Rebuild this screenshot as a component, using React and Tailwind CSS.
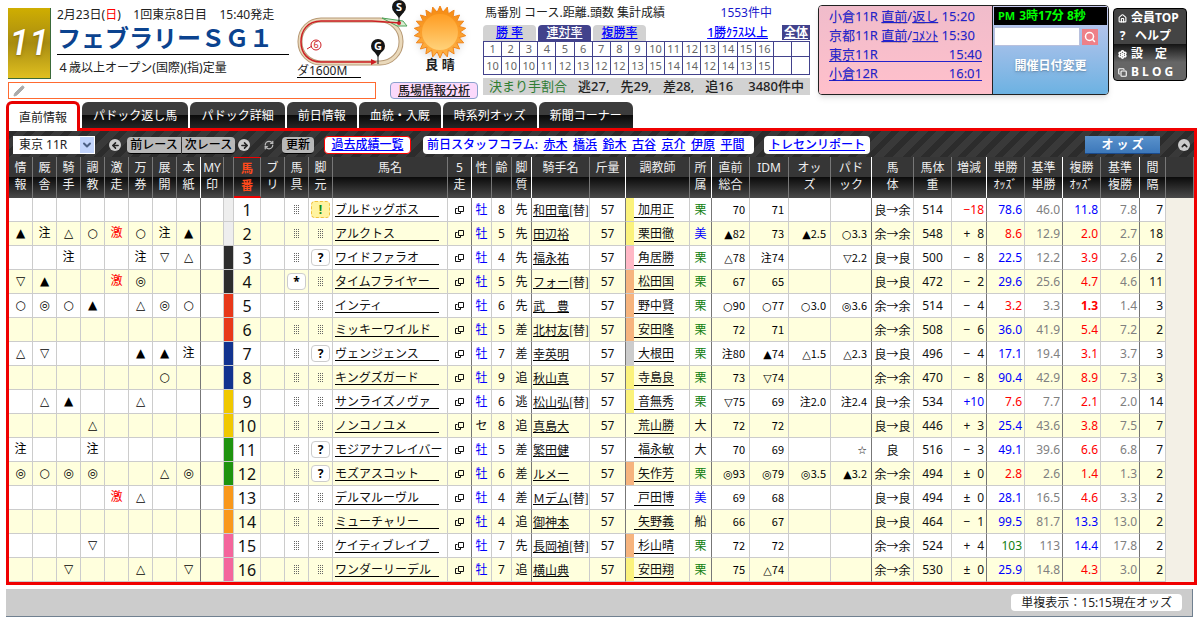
import React, { useState } from "react";
import { ArrowLeft, ArrowRight, ChevronDown, ChevronUp, Copy, House, Pencil, RefreshCw, Search, Settings } from "lucide-react";

const MARK_COLUMNS = ["情報", "厩舎", "騎手", "調教", "激走", "万券", "展開", "本紙"];

const COLUMNS = [
  ...MARK_COLUMNS.map((m, i) => ({ w: "w-6", lines: [m[0], m[1]], strong: i === 7 })),
  { w: "w-[23px]", lines: ["MY", "印"] },
  { w: "w-[10px]", lines: [] },
  { w: "w-[27px]", lines: ["馬", "番"], active: true },
  { w: "w-6", lines: ["ブ", "リ"] },
  { w: "w-6", lines: ["馬", "具"] },
  { w: "w-6", lines: ["脚", "元"] },
  { w: "w-[115px]", lines: ["馬名"] },
  { w: "w-6", lines: ["5", "走"], strong: true },
  { w: "w-5", lines: ["性"] },
  { w: "w-5", lines: ["齢"] },
  { w: "w-5", lines: ["脚", "質"], strong: true },
  { w: "w-[58px]", lines: ["騎手名"] },
  { w: "w-9", lines: ["斤量"], strong: true },
  { w: "w-16", lines: ["調教師"] },
  { w: "w-[22px]", lines: ["所", "属"], strong: true },
  { w: "w-[38px]", lines: ["直前", "総合"] },
  { w: "w-[39px]", lines: ["IDM"] },
  { w: "w-[42px]", lines: ["オッ", "ズ"] },
  { w: "w-[41px]", lines: ["パド", "ック"], strong: true },
  { w: "w-[42px]", lines: ["馬", "体"] },
  { w: "w-[38px]", lines: ["馬体", "重"] },
  { w: "w-[35px]", lines: ["増減"], strong: true },
  { w: "w-[38px]", lines: ["単勝", "ｵｯｽﾞ"] },
  { w: "w-[38px]", lines: ["基準", "単勝"], strong: true },
  { w: "w-[38px]", lines: ["複勝", "ｵｯｽﾞ"] },
  { w: "w-[39px]", lines: ["基準", "複勝"], strong: true },
  { w: "w-[26px]", lines: ["間", "隔"] },
  { w: "", lines: [] },
];

const FRAME = ["bg-[#eeeeee]", "bg-[#2d2d2d]", "bg-[#e8391a]", "bg-[#12338f]", "bg-[#f0c800]", "bg-[#1f940f]", "bg-[#f9981c]", "bg-[#f4659c]"];
const STABLE = { y: "bg-[#fbf27c]", p: "bg-[#ffb8c6]", o: "bg-[#f6b47e]", g: "bg-[#cccccc]", "": "" };

// marks, gear, leg, name, sex, age, style, jockey, replaced, stripe, trainer, base, total, idm, odds, paddock, condition, weight, diff, win, baseWin, place, basePlace, interval
const HORSES = [
  ["        ", "", "!", "ブルドッグボス", "牡", 8, "先", "和田竜", 1, "y", "加用正", "栗", "70", "71", "", "", "良→余", 514, "−18", "78.6", "46.0", "11.8", "7.8", 7],
  ["▲注△○激○注▲", "", "", "アルクトス", "牡", 5, "先", "田辺裕", 0, "y", "栗田徹", "美", "▲82", "73", "▲2.5", "○3.3", "余→余", 548, "+ 8", "8.6", "12.9", "2.0", "2.7", 18],
  ["  注  注▽△", "", "?", "ワイドファラオ", "牡", 4, "先", "福永祐", 0, "p", "角居勝", "栗", "△78", "注74", "", "▽2.2", "良→良", 500, "− 8", "22.5", "12.2", "3.9", "2.6", 2],
  ["▽▲  激◎  ", "*", "", "タイムフライヤー", "牡", 5, "先", "フォー", 1, "o", "松田国", "栗", "67", "65", "", "", "良→良", 472, "− 2", "29.6", "25.6", "4.7", "4.6", 11],
  ["○◎○▲ △◎○", "", "", "インティ", "牡", 6, "先", "武　豊", 0, "o", "野中賢", "栗", "○90", "○77", "○3.0", "◎3.6", "余→余", 514, "− 4", "3.2", "3.3", "1.3", "1.4", 3],
  ["        ", "", "", "ミッキーワイルド", "牡", 5, "差", "北村友", 1, "o", "安田隆", "栗", "72", "71", "", "", "余→余", 508, "− 6", "36.0", "41.9", "5.4", "7.2", 2],
  ["△▽   ▲▲注", "", "?", "ヴェンジェンス", "牡", 7, "差", "幸英明", 0, "g", "大根田", "栗", "注80", "▲74", "△1.5", "△2.3", "良→良", 496, "− 4", "17.1", "19.4", "3.1", "3.7", 3],
  ["      ○ ", "", "", "キングズガード", "牡", 9, "追", "秋山真", 0, "y", "寺島良", "栗", "73", "▽74", "", "", "余→余", 470, "− 8", "90.4", "42.9", "8.9", "7.3", 3],
  [" △▲  △  ", "", "", "サンライズノヴァ", "牡", 6, "逃", "松山弘", 1, "y", "音無秀", "栗", "▽75", "69", "注2.0", "注2.4", "良→余", 534, "+10", "7.6", "7.7", "2.1", "2.0", 14],
  ["   △    ", "", "", "ノンコノユメ", "セ", 8, "追", "真島大", 0, "", "荒山勝", "大", "72", "72", "", "", "良→良", 446, "+ 3", "25.4", "43.6", "3.8", "7.5", 7],
  ["注  注    ", "", "?", "モジアナフレイバー", "牡", 5, "差", "繁田健", 0, "", "福永敏", "大", "70", "69", "", "☆", "良", 516, "− 3", "49.1", "39.6", "6.6", "6.8", 7],
  ["◎○◎◎  △◎", "", "?", "モズアスコット", "牡", 6, "差", "ルメー", 0, "o", "矢作芳", "栗", "◎93", "◎79", "◎3.5", "▲3.2", "余→余", 494, "± 0", "2.8", "2.6", "1.4", "1.3", 2],
  ["    激△  ", "", "", "デルマルーヴル", "牡", 4, "差", "Ｍデム", 1, "", "戸田博", "美", "69", "68", "", "", "良→良", 494, "± 0", "28.1", "16.5", "4.6", "3.3", 2],
  ["        ", "", "", "ミューチャリー", "牡", 4, "追", "御神本", 0, "", "矢野義", "船", "66", "67", "", "", "良→良", 464, "− 1", "99.5", "81.7", "13.3", "13.0", 2],
  ["   ▽    ", "", "", "ケイティブレイブ", "牡", 7, "先", "長岡禎", 1, "o", "杉山晴", "栗", "72", "72", "", "", "余→余", 524, "+ 4", "103", "113", "14.4", "17.8", 2],
  ["  ▽  △ ▽", "", "", "ワンダーリーデル", "牡", 7, "追", "横山典", 0, "y", "安田翔", "栗", "75", "△74", "", "", "余→余", 530, "± 0", "25.9", "14.8", "4.3", "3.0", 2],
];

const GATE_RATES = [10, 10, 10, 11, 12, 13, 12, 12, 13, 15, 14, 14, 12, 14, 13, 15];
const TABS = ["直前情報", "パドック返し馬", "パドック詳細", "前日情報", "血統・入厩", "時系列オッズ", "新聞コーナー"];
const WRITERS = ["赤木", "橋浜", "鈴木", "古谷", "京介", "伊原", "平間"];

function winColor(v) {
  if (v >= 100) return "text-[#108010]";
  return v < 10 ? "text-[#ff0000]" : "text-[#0000ff]";
}

function RaceNumber() {
  return (
    <div className="mt-2 flex h-[71px] w-[43px] shrink-0 items-center justify-center border-r border-b border-[#3a6a3a] bg-linear-to-b from-[#cfae00] via-[#a88c10] to-[#e0c020] font-['Roboto','Liberation_Sans',sans-serif] text-4xl leading-none font-medium text-white italic text-shadow-md">
      11
    </div>
  );
}

function Course() {
  return (
    <svg width="112" height="68" viewBox="0 0 112 68" className="block">
      <rect x="3" y="20" width="101" height="43" rx="21" fill="none" stroke="#b79a76" strokeWidth="5" />
      <rect x="3" y="20" width="101" height="43" rx="21" fill="none" stroke="#ead9bb" strokeWidth="3" />
      <path d="M85 18 L106 21 L110 26 L100 26 Z" fill="#d8ecd0" stroke="#4fa35a" strokeWidth="1" />
      <path d="M103 23 L75 21 H24 C10 21 4 31 4 42 C4 53 11 62 24 62 H74" fill="none" stroke="#cc1f24" strokeWidth="1.5" />
      <path d="M74 59 L80 62 L74 65 Z" fill="#cc1f24" />
      <circle cx="102" cy="23" r="2" fill="#cc1f24" />
      <path d="M81 50 V64 M102 10 V22" stroke="#222" strokeWidth="1" />
      <path d="M76 50 L81 57 L86 50 Z M97 12 L102 18 L107 12 Z" fill="#151515" />
      <circle cx="81" cy="46" r="7" fill="#151515" />
      <circle cx="102" cy="7" r="7" fill="#151515" />
      <text x="81" y="50" textAnchor="middle" fontSize="11" fontWeight="700" fill="#fff">G</text>
      <text x="102" y="11" textAnchor="middle" fontSize="11" fontWeight="700" fill="#fff">S</text>
      <circle cx="19" cy="45" r="5" fill="#fff" stroke="#cc1f24" strokeWidth="1" />
      <text x="19" y="48" textAnchor="middle" fontSize="9" fill="#cc1f24">6</text>
      <path d="M15 46 L10 49" stroke="#cc1f24" strokeWidth="1" />
    </svg>
  );
}

function Sun() {
  const points = Array.from({ length: 44 }, (_, i) => {
    const r = i % 2 ? 20 : 26;
    const a = (i / 44) * Math.PI * 2;
    return `${(27 + r * Math.sin(a)).toFixed(1)},${(26 - r * Math.cos(a)).toFixed(1)}`;
  }).join(" ");
  return (
    <svg width="54" height="54" viewBox="0 0 54 54" className="block drop-shadow-md">
      <defs>
        <linearGradient id="sun-rays" x1="0" y1="0" x2="0" y2="1">
          <stop offset="0" stopColor="#f58a10" />
          <stop offset="1" stopColor="#ffb347" />
        </linearGradient>
        <linearGradient id="sun-face" x1="0" y1="0" x2="0" y2="1">
          <stop offset="0" stopColor="#ff9c22" />
          <stop offset="1" stopColor="#ffd27a" />
        </linearGradient>
      </defs>
      <polygon points={points} fill="url(#sun-rays)" stroke="#f0841a" strokeWidth="1" />
      <circle cx="27" cy="26" r="18" fill="url(#sun-face)" />
    </svg>
  );
}

function Dots() {
  return (
    <svg width="5" height="9" viewBox="0 0 5 9" className="mx-auto block">
      {[0, 2, 4].map((x) => (
        <path key={x} d={`M${x}.5 0 V9`} stroke="#666" strokeWidth="1" strokeDasharray="1 1" />
      ))}
    </svg>
  );
}

function WindowIcon() {
  return (
    <svg width="9" height="9" viewBox="0 0 9 9" fill="none" stroke="#111" className="mx-auto block">
      <path d="M3.5 1.5 H8.5 V6.5 H3.5 Z" />
      <path d="M2.5 3.5 H0.5 V8.5 H5.5 V7" />
    </svg>
  );
}

function Gear({ value }) {
  if (!value) return <Dots />;
  const alert = value === "!";
  return (
    <button
      className={`mx-auto block h-[17px] w-[19px] rounded border text-xs leading-[15px] font-bold ${
        alert ? "border-dashed border-[#f0c040] bg-[#fff3a0] text-[#128a12]" : "border-[#cccccc] bg-white text-black"
      }`}
    >
      {value}
    </button>
  );
}

function Cell({ className = "", strong, children }) {
  return (
    <td className={`h-6 border-r border-b border-b-[#cccccc] p-0 ${strong ? "border-r-[#777777]" : "border-r-[#cccccc]"} ${className}`}>
      {children}
    </td>
  );
}

function Figure({ value, strong }) {
  const mark = value.replace(/[\d.]/g, "");
  return (
    <Cell strong={strong} className="pr-1 text-right font-['Noto_Sans_CJK_JP',sans-serif] text-[11px] whitespace-nowrap text-black">
      {mark && <span className="font-['DejaVu_Sans','Noto_Sans_CJK_JP',sans-serif]">{mark}</span>}
      {value.slice(mark.length)}
    </Cell>
  );
}

function HorseRow({ horse, index }) {
  const [marks, gear, leg, name, sex, age, style, jockey, replaced, stripe, trainer, base, total, idm, odds, paddock, condition, weight, diff, win, baseWin, place, basePlace, interval] = horse;
  const ja = "font-['Noto_Sans_CJK_JP',sans-serif]";
  const baseColor = base === "栗" ? "text-[#108010]" : base === "美" ? "text-[#0000ff]" : "";
  const diffColor = diff === "−18" ? "text-[#ff0000]" : diff === "+10" ? "text-[#0000ff]" : "";
  return (
    <tr className={index % 2 ? "bg-[#ffffdd]" : "bg-white"}>
      {MARK_COLUMNS.map((m, i) => (
        <Cell key={m} strong={i === 7} className={`font-['DejaVu_Sans','Noto_Sans_CJK_JP',sans-serif] ${marks[i] === "激" ? "text-[#ff0000]" : "text-black"}`}>
          {(marks[i] || "").trim()}
        </Cell>
      ))}
      <Cell />
      <Cell className={FRAME[index >> 1]} />
      <Cell className="text-base leading-5">{index + 1}</Cell>
      <Cell />
      <Cell><Gear value={gear} /></Cell>
      <Cell><Gear value={leg} /></Cell>
      <Cell className="pl-0.5">
        <a href="#" className="block w-[104px] border-b border-black text-left leading-[13px] whitespace-nowrap">{name}</a>
      </Cell>
      <Cell strong><button className="block w-full" aria-label={`${name} 5走`}><WindowIcon /></button></Cell>
      <Cell className={sex === "牡" ? "text-[#0000ff]" : ""}>{sex}</Cell>
      <Cell>{age}</Cell>
      <Cell strong>{style}</Cell>
      <Cell>
        <div className={`flex items-center pl-px leading-[13px] whitespace-nowrap ${ja}`}>
          <a href="#" className="border-b border-black">{jockey}</a>
          {replaced ? "[替]" : ""}
        </div>
      </Cell>
      <Cell strong>57</Cell>
      <Cell>
        <div className="flex h-[23px] items-center">
          <span className={`h-full w-2 ${STABLE[stripe]}`} />
          <a href="#" className="block border-b border-black pl-1 leading-[15px]">{trainer}</a>
        </div>
      </Cell>
      <Cell strong className={baseColor}>{base}</Cell>
      <Figure value={total} />
      <Figure value={idm} />
      <Figure value={odds} />
      <Figure value={paddock} strong />
      <Cell className={`whitespace-nowrap ${ja}`}>{condition}</Cell>
      <Cell>{weight}</Cell>
      <Cell strong className={`pr-0.5 text-right whitespace-pre ${diffColor}`}>{diff.replace(" ", "\u2007")}</Cell>
      <Cell className={`pr-0.5 text-right ${winColor(Number(win))}`}>{win}</Cell>
      <Cell strong className="pr-0.5 text-right text-[#808080]">{baseWin}</Cell>
      <Cell className={`pr-0.5 text-right ${winColor(Number(place))} ${place === "1.3" ? "font-bold" : ""}`}>{place}</Cell>
      <Cell strong className="pr-0.5 text-right text-[#808080]">{basePlace}</Cell>
      <Cell className="pr-0.5 text-right">{interval}</Cell>
      <td className="bg-[#f3f0e6]" />
    </tr>
  );
}

function RaceHeader() {
  return (
    <div className="flex w-[470px] shrink-0 flex-col">
      <div className="flex h-20">
        <RaceNumber />
        <div className="ml-1.5 w-[232px] shrink-0 pt-1.5">
          <p className="leading-[18px] whitespace-pre">2月23日(<span className="text-[#ff0000]">日</span>)    1回東京8日目    15:40発走</p>
          <h1 className="border-b border-black pb-0.5 text-2xl leading-7 font-bold whitespace-nowrap text-[#0b438f]">フェブラリーＳＧ１</h1>
          <p className="pt-1 leading-[18px]">４歳以上オープン(国際)(指)定量</p>
        </div>
        <div className="ml-2 w-[112px] shrink-0">
          <Course />
          <a href="#" className="-mt-1 block w-16 border-b border-black leading-[13px]">ダ1600M</a>
        </div>
        <div className="ml-1 flex flex-col items-center pt-1.5">
          <Sun />
          <span className="-mt-1 text-[13px] leading-4 font-bold">良 晴</span>
        </div>
      </div>
      <div className="mt-0.5 flex items-center">
        <label className="flex h-[17px] w-[368px] items-center border border-[#ff6a30] px-1">
          <Pencil size={12} className="shrink-0 fill-[#aaaaaa] text-[#aaaaaa]" />
          <input aria-label="メモ" className="ml-1 w-full outline-none" />
        </label>
        <button className="ml-3.5 h-[17px] w-[88px] rounded border border-[#8aa0cc] bg-[#fbd9fb] leading-[14px] font-medium underline">馬場情報分析</button>
      </div>
    </div>
  );
}

function RateStats() {
  const tab = "h-4 w-[53px] rounded-t bg-[#d2d2d2] leading-4 font-medium text-[#0000ff] underline";
  const cell = "border border-[#42428c] p-0";
  return (
    <section className="ml-[5px] w-[327px] shrink-0 pt-1">
      <div className="flex items-center px-0.5 leading-[18px]">
        <span>馬番別 コース.距離.頭数 集計成績</span>
        <span className="ml-auto pr-9 text-[#1818cc]">1553件中</span>
      </div>
      <div className="mt-[3px] flex gap-0.5">
        <button className={tab}>勝 率</button>
        <button className="h-4 w-[53px] rounded-t bg-[#42428c] leading-4 font-medium text-white underline">連対率</button>
        <button className={tab}>複勝率</button>
        <a href="#" className="ml-auto leading-4 font-medium text-[#0000ff] underline">1勝ｸﾗｽ以上</a>
        <button className="ml-3 h-[15px] w-7 bg-[#42428c] leading-[15px] font-bold text-white underline">全体</button>
      </div>
      <table className="w-full table-fixed border-collapse text-center text-[11px] leading-3 text-[#666666]">
        <tbody>
          <tr>
            {Array.from({ length: 18 }, (_, i) => <td key={i} className={`h-[15px] ${cell}`}>{i < 16 ? i + 1 : ""}</td>)}
          </tr>
          <tr>
            {Array.from({ length: 18 }, (_, i) => <td key={i} className={`h-[18px] ${cell}`}>{GATE_RATES[i]}</td>)}
          </tr>
        </tbody>
      </table>
      <p className="mt-[3px] flex h-[17px] items-center justify-between bg-[#d2d2d2] px-1.5 text-[13px] leading-[17px] font-medium whitespace-nowrap">
        <span className="font-normal text-[#2f7d32]">決まり手割合</span>
        <span>逃27,</span>
        <span>先29,</span>
        <span>差28,</span>
        <span>追16</span>
        <span className="pl-1">3480件中</span>
      </p>
    </section>
  );
}

function RaceClock() {
  return (
    <section className="mt-[5px] ml-2 flex h-[90px] w-[291px] shrink-0 overflow-hidden rounded border border-[#222222] shadow-md">
      <ul className="w-[174px] border-r border-[#222222] bg-linear-to-b from-[#f0bccb] to-[#ffc0cb] px-2.5 pt-px text-[13px] leading-[19px] whitespace-nowrap text-[#2222cc] text-shadow-2xs">
        <li>小倉11R <a href="#" className="underline">直前</a>/<a href="#" className="underline">返し</a> 15:20</li>
        <li>京都11R <a href="#" className="underline">直前</a>/<a href="#" className="underline">ｺﾒﾝﾄ</a> 15:30</li>
        <li><a href="#" className="flex h-[17px] justify-between border-b border-[#2222cc]"><span>東京11R</span><span>15:40</span></a></li>
        <li className="pt-0.5"><a href="#" className="flex h-[17px] justify-between border-b border-[#2222cc]"><span>小倉12R</span><span>16:01</span></a></li>
      </ul>
      <div className="flex-1 bg-linear-to-b from-[#c4c8ee] to-[#6cb2e2] p-px">
        <p className="flex h-[18px] items-center gap-1 bg-black px-1 font-bold whitespace-nowrap text-[#00ff00]">
          <span className="text-[11px]">PM</span>
          <span>3時17分 8秒</span>
        </p>
        <div className="mt-0.5 flex items-center">
          <input aria-label="検索" className="h-[19px] w-[86px] border border-[#b8c0dd] bg-white px-1 outline-none" />
          <button aria-label="検索する" className="ml-0.5 flex size-4 items-center justify-center bg-[#ee8088] text-white"><Search size={12} strokeWidth={3} /></button>
        </div>
        <button className="mx-auto mt-3 block leading-4 font-bold text-white text-shadow-md">開催日付変更</button>
      </div>
    </section>
  );
}

function SideMenu() {
  const item = "flex h-[18px] w-full items-center gap-1 text-left";
  return (
    <nav className="mt-2 ml-1 h-[73px] w-[74px] shrink-0 rounded border border-black bg-[linear-gradient(#444444_50%,#161616_50%,#666666_75%)] px-1 font-bold whitespace-nowrap text-white">
      <a href="#" className={item}><House size={9} strokeWidth={3} />会員TOP</a>
      <a href="#" className={item}><span className="w-[9px] text-center">?</span><span className="pl-1">ヘルプ</span></a>
      <a href="#" className={item}><Settings size={9} strokeWidth={4} />設　定</a>
      <a href="#" className={item}><Copy size={9} strokeWidth={3} />B L O G</a>
    </nav>
  );
}

function RoundIcon({ icon: Icon, label, className }) {
  return (
    <button aria-label={label} className={`flex size-3 shrink-0 items-center justify-center rounded-full bg-[#cccccc] text-[#222222] ${className}`}>
      <Icon size={9} strokeWidth={4} />
    </button>
  );
}

function Toolbar() {
  const grey = "h-[17px] bg-[#b8b8b8] leading-[15px] border-b border-black font-medium text-black";
  return (
    <div className="flex h-[26px] items-center bg-[repeating-linear-gradient(135deg,#2c2c2c_0px,#2c2c2c_6px,#393939_6px,#393939_13px)] pt-0.5 pr-1 pl-1 whitespace-nowrap">
      <div className="relative h-[18px] w-[82px] shrink-0 bg-white">
        <select aria-label="レース選択" className="h-full w-full appearance-none pl-1.5 text-xs leading-[18px]">
          <option>東京 11R</option>
        </select>
        <span className="pointer-events-none absolute top-px right-px flex h-4 w-3.5 items-center justify-center bg-[#c2d4fb] text-[#4d6185]">
          <ChevronDown size={12} strokeWidth={4} />
        </span>
      </div>
      <RoundIcon icon={ArrowLeft} label="前へ" className="ml-3.5" />
      <button className={`ml-1.5 w-[54px] rounded-l ${grey}`}>前レース</button>
      <button className={`ml-px w-[53px] rounded-r ${grey}`}>次レース</button>
      <RoundIcon icon={ArrowRight} label="次へ" className="ml-[3px]" />
      <RefreshCw size={10} strokeWidth={3} className="ml-3.5 text-[#bbbbbb]" />
      <button className={`ml-2 w-8 rounded ${grey}`}>更新</button>
      <a href="#" className="ml-2.5 h-[18px] w-[87px] rounded border border-[#ff0000] bg-white text-center leading-4 font-medium text-[#0000ff] underline">過去成績一覧</a>
      <div className="ml-3 flex h-[18px] w-[331px] items-center justify-between rounded bg-white px-1 leading-[18px] font-medium text-[#0000ff]">
        <span>前日スタッフコラム:</span>
        {WRITERS.map((w) => <a key={w} href="#" className="underline">{w}</a>)}
        <span />
      </div>
      <a href="#" className="ml-2.5 h-[18px] w-[106px] rounded bg-white text-center leading-[18px] font-medium text-[#0000ff] underline">トレセンリポート</a>
      <button className="ml-auto h-[18px] w-[75px] bg-linear-to-b from-[#5a92cc] to-[#3c78ba] leading-[16px] font-bold text-white border-b border-[#1a4a8c]">オ ッ ズ</button>
      <RoundIcon icon={ChevronUp} label="閉じる" className="ml-[18px]" />
    </div>
  );
}

export default function App() {
  const [active, setActive] = useState(0);

  return (
    <main className="bg-white pr-[3px] pb-1 pl-1.5 font-['Noto_Sans','Noto_Sans_CJK_JP',sans-serif] text-xs text-[#222222]">
      <header className="flex h-[101px] pl-0.5">
        <RaceHeader />
        <RateStats />
        <RaceClock />
        <SideMenu />
      </header>

      {/* Tabs */}
      <div className="flex items-end gap-0.5">
        {TABS.map((t, i) => (
          <button
            key={t}
            onClick={() => setActive(i)}
            className={
              i === active
                ? "-mb-[3px] h-[30px] w-[74px] rounded-t-md border-x-[3px] border-t-[3px] border-[#e80000] bg-white text-[#222222]"
                : "h-[26px] rounded-t-md bg-[linear-gradient(#3c3c3c_50%,#0a0a0a_50%,#262626)] px-[11px] pt-0.5 text-white"
            }
          >
            {t}
          </button>
        ))}
      </div>

      {/* Race card */}
      <div className="border-[3px] border-[#f00000]">
        <Toolbar />
        <table className="w-full table-fixed border-separate border-spacing-0 text-center leading-[17px] text-[#111111]">
          <colgroup>
            {COLUMNS.map((c, i) => <col key={i} className={c.w} />)}
          </colgroup>
          <thead>
            <tr className="bg-[linear-gradient(#363636_50%,#0c0c0c_50%,#4a4a4a)]">
              {COLUMNS.map((c, i) => (
                <th
                  key={i}
                  className={`h-[41px] overflow-hidden border-r p-0 pt-0.5 align-top whitespace-nowrap ${c.strong ? "border-r-white" : "border-r-[#777777]"} ${
                    c.active ? "border-t border-b-2 border-y-[#f00000] font-bold text-[#ff4a1c]" : "font-normal text-[#eeeeee]"
                  }`}
                >
                  {c.lines.map((l) => <div key={l}>{l}</div>)}
                </th>
              ))}
            </tr>
          </thead>
          <tbody>
            {HORSES.map((h, i) => <HorseRow key={h[3]} horse={h} index={i} />)}
          </tbody>
        </table>
      </div>

      <footer className="mt-1 mr-1 flex h-7 items-center justify-end border-r border-b border-[#708090] bg-[#cccccc] pr-2.5">
        <span className="rounded bg-white px-2.5 leading-[17px]">単複表示：15:15現在オッズ</span>
      </footer>
    </main>
  );
}
